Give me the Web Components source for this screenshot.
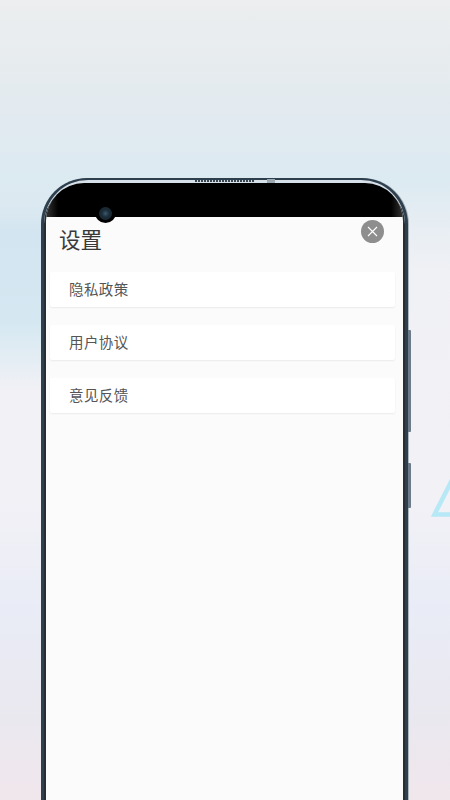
<!DOCTYPE html>
<html lang="zh">
<head>
<meta charset="utf-8">
<title>设置</title>
<style>
  html, body { margin: 0; height: 100%; overflow: hidden; }
  body { font-family: "Noto Sans CJK SC", "Noto Sans", sans-serif; }
</style>
</head>
<body>
<promo-stage>
  <phone-frame>
    <settings-screen heading="设置">
      <settings-item>隐私政策</settings-item>
      <settings-item>用户协议</settings-item>
      <settings-item>意见反馈</settings-item>
    </settings-screen>
  </phone-frame>
</promo-stage>

<script>
const stageTemplate = document.createElement('template')
stageTemplate.innerHTML = `
  <style>
    :host {
      display: block;
      position: relative;
      width: 450px;
      height: 800px;
      overflow: hidden;
      box-sizing: border-box;
      padding: 178px 0 0 41px;
      background: linear-gradient(180deg, #eceeef 0, #e7ecee 60px, #e1eaf0 120px, #dceaf1 180px, #e8eef3 230px, #f0f1f5 275px, #f2f1f6 500px, #e9ecf6 610px, #eae8ef 720px, #f0e7ec 800px);
    }
    .tint {
      position: absolute;
      left: 0;
      top: 180px;
      width: 60px;
      height: 210px;
      background: linear-gradient(180deg, rgba(211,229,240,0) 0, #d3e5f0 25%, #d5e8f2 68%, rgba(213,232,242,0) 100%);
    }
    svg { position: absolute; left: 425px; top: 470px; }
  </style>
  <div class="tint"></div>
  <svg width="25" height="50" viewBox="0 0 25 50" fill="none">
    <path d="M27 10 L9.5 44.5 H27" stroke="#b6e8f5" stroke-width="4.5"/>
  </svg>
  <slot></slot>
`

class PromoStage extends HTMLElement {
  constructor() {
    super()
    this.attachShadow({ mode: 'open' }).appendChild(stageTemplate.content.cloneNode(true))
  }
}

const phoneTemplate = document.createElement('template')
phoneTemplate.innerHTML = `
  <style>
    :host {
      display: block;
      position: relative;
      width: 367px;
      height: 660px;
      box-sizing: border-box;
      padding: 2px 3px 0 3px;
      border-radius: 46px 46px 0 0;
      background: #2e3f4e;
      box-shadow: 1px 0 0 #aeb6be;
      z-index: 1;
    }
    .rim {
      box-sizing: border-box;
      height: 100%;
      padding: 0 2px;
      border-radius: 44px 44px 0 0;
      background: #262d34;
      border-top: 3px solid #d5e0e8;
    }
    .glass {
      display: flex;
      flex-direction: column;
      height: 100%;
      border-radius: 38px 38px 0 0;
      overflow: hidden;
      background: #fbfbfb;
    }
    .top {
      flex: none;
      height: 34px;
      background: linear-gradient(90deg, #333 0, #000 12px, #000 calc(100% - 12px), #333 100%);
    }
    .screen { flex: 1; min-height: 0; }
    .speaker {
      position: absolute;
      left: 154px;
      top: 2px;
      width: 60px;
      height: 2px;
      background: repeating-linear-gradient(90deg, #3a4650 0, #3a4650 2px, #cfdbe3 2px, #cfdbe3 3px);
    }
    .mic {
      position: absolute;
      left: 226px;
      top: 1px;
      width: 8px;
      height: 4px;
      background: #9aa6b0;
    }
    .notch {
      position: absolute;
      left: 54px;
      top: 24px;
      width: 21px;
      height: 21px;
      display: flex;
      align-items: center;
      justify-content: center;
      border-radius: 50%;
      background: #000;
    }
    .camera {
      width: 13px;
      height: 13px;
      margin-top: 1px;
      border-radius: 50%;
      background: radial-gradient(circle, #3c5a6b 0, #24394a 28%, #1a2a35 45%, #1c2c37 100%);
    }
    .key {
      position: absolute;
      left: 367px;
      width: 3px;
      background: #6d7a88;
      border-radius: 0 1px 1px 0;
    }
    .key.power { top: 152px; height: 102px; }
    .key.volume { top: 285px; height: 45px; }
  </style>
  <div class="rim">
    <div class="glass">
      <div class="top"></div>
      <div class="screen"><slot></slot></div>
    </div>
  </div>
  <div class="speaker"></div>
  <div class="mic"></div>
  <div class="notch"><div class="camera"></div></div>
  <div class="key power"></div>
  <div class="key volume"></div>
`

class PhoneFrame extends HTMLElement {
  constructor() {
    super()
    this.attachShadow({ mode: 'open' }).appendChild(phoneTemplate.content.cloneNode(true))
  }
}

const screenTemplate = document.createElement('template')
screenTemplate.innerHTML = `
  <style>
    :host {
      display: block;
      position: relative;
      height: 100%;
      box-sizing: border-box;
      padding: 6px 8px 0 4px;
    }
    h1 {
      margin: 0 0 17px 9px;
      font-size: 21.5px;
      font-weight: 400;
      line-height: 32px;
      color: #3a3a3a;
    }
    .list {
      display: flex;
      flex-direction: column;
      gap: 18px;
    }
    close-button {
      position: absolute;
      right: 19.5px;
      top: 2.5px;
    }
  </style>
  <h1></h1>
  <close-button></close-button>
  <div class="list"><slot></slot></div>
`

class SettingsScreen extends HTMLElement {
  constructor() {
    super()
    this.attachShadow({ mode: 'open' }).appendChild(screenTemplate.content.cloneNode(true))
    this.shadowRoot.querySelector('h1').textContent = this.getAttribute('heading')
  }
}

const itemTemplate = document.createElement('template')
itemTemplate.innerHTML = `
  <style>
    :host {
      display: block;
      height: 35px;
      box-sizing: border-box;
      padding-left: 19px;
      background: #fff;
      border-radius: 2px;
      box-shadow: 0 1px 2px rgba(0, 0, 0, 0.07);
      font-size: 14.5px;
      letter-spacing: 0.4px;
      line-height: 33px;
      color: #555;
    }
  </style>
  <slot></slot>
`

class SettingsItem extends HTMLElement {
  constructor() {
    super()
    this.attachShadow({ mode: 'open' }).appendChild(itemTemplate.content.cloneNode(true))
  }
}

const closeTemplate = document.createElement('template')
closeTemplate.innerHTML = `
  <style>
    :host {
      display: flex;
      align-items: center;
      justify-content: center;
      width: 23px;
      height: 23px;
      border-radius: 50%;
      background: #8e8e8e;
    }
  </style>
  <svg width="11" height="11" viewBox="0 0 11 11">
    <path d="M1 1 L10 10 M10 1 L1 10" stroke="#fff" stroke-width="1.1" fill="none"/>
  </svg>
`

class CloseButton extends HTMLElement {
  constructor() {
    super()
    this.attachShadow({ mode: 'open' }).appendChild(closeTemplate.content.cloneNode(true))
  }
}

customElements.define('promo-stage', PromoStage)
customElements.define('phone-frame', PhoneFrame)
customElements.define('settings-screen', SettingsScreen)
customElements.define('settings-item', SettingsItem)
customElements.define('close-button', CloseButton)
</script>
</body>
</html>
